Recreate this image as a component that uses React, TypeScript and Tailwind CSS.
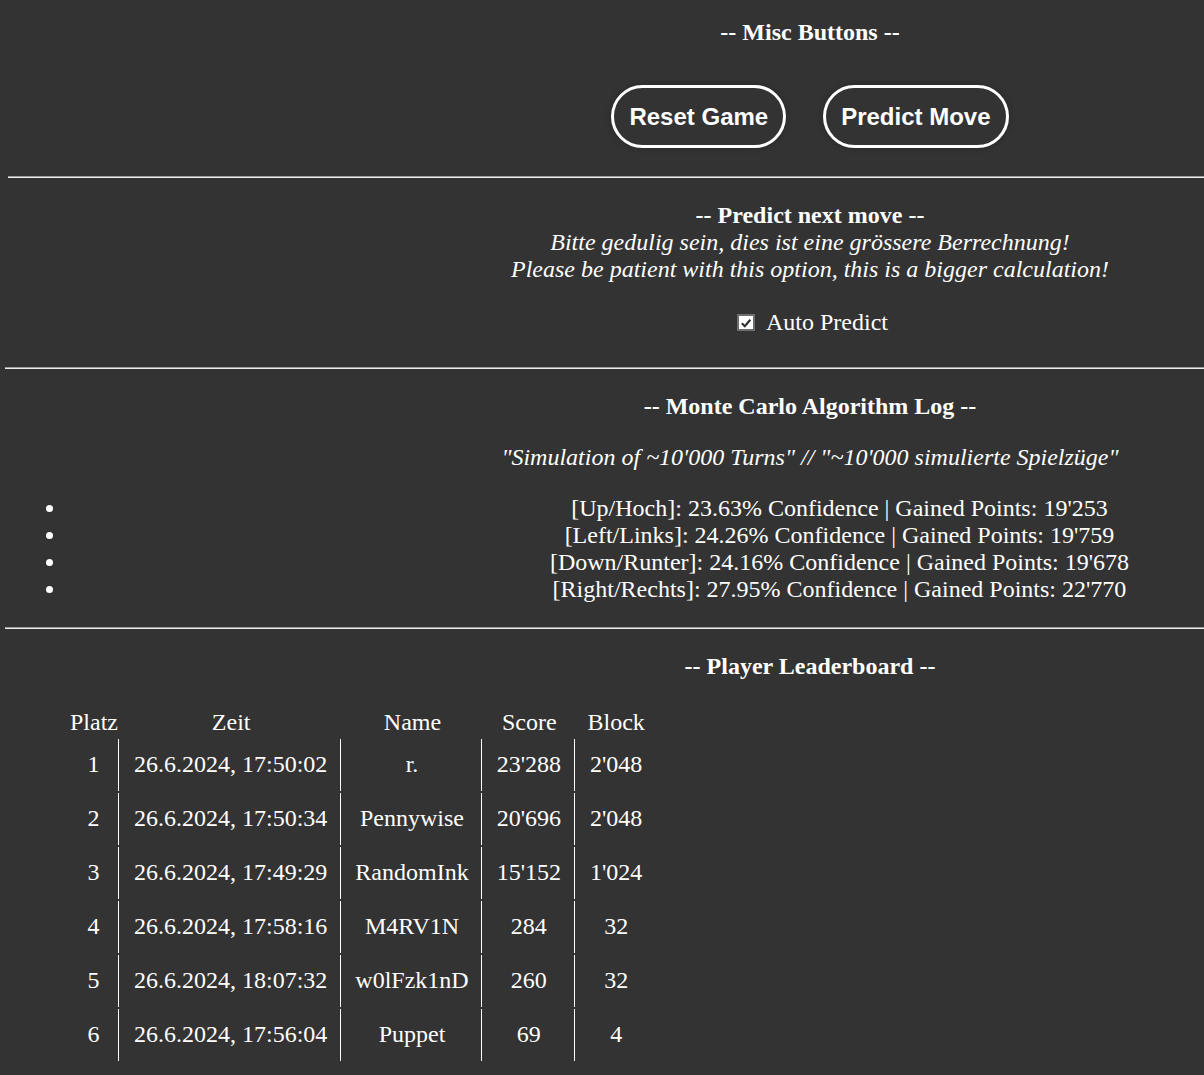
import { Fragment } from "react";

const MOVES = [
  { dir: "[Up/Hoch]", conf: "23.63%", pts: "19'253" },
  { dir: "[Left/Links]", conf: "24.26%", pts: "19'759" },
  { dir: "[Down/Runter]", conf: "24.16%", pts: "19'678" },
  { dir: "[Right/Rechts]", conf: "27.95%", pts: "22'770" },
];

const PLAYERS = [
  { rank: 1, time: "26.6.2024, 17:50:02", name: "r.", score: "23'288", block: "2'048" },
  { rank: 2, time: "26.6.2024, 17:50:34", name: "Pennywise", score: "20'696", block: "2'048" },
  { rank: 3, time: "26.6.2024, 17:49:29", name: "RandomInk", score: "15'152", block: "1'024" },
  { rank: 4, time: "26.6.2024, 17:58:16", name: "M4RV1N", score: "284", block: "32" },
  { rank: 5, time: "26.6.2024, 18:07:32", name: "w0lFzk1nD", score: "260", block: "32" },
  { rank: 6, time: "26.6.2024, 17:56:04", name: "Puppet", score: "69", block: "4" },
];

function Rule({ className = "" }: { className?: string }) {
  return <div className={`h-[2px] border-t border-b border-t-[#9c9c9c] border-b-[#ececec] ${className}`} />;
}

function Heading({ children, className = "" }: { children: React.ReactNode; className?: string }) {
  return <div className={`text-center font-bold ${className}`}>{children}</div>;
}

function PillButton({ label }: { label: string }) {
  return (
    <button className="rounded-full border-[3px] border-white bg-transparent px-[15px] py-[15px] font-['Liberation_Sans',Arial,sans-serif] text-[24px] font-bold leading-[27px] text-white shadow-[0_0_6px_rgba(0,0,0,0.25)]">
      {label}
    </button>
  );
}

export default function App() {
  const th = "px-[1px] py-[1px] text-center font-normal";
  const td = "border-r border-white pt-3 pb-[13px] text-center";

  return (
    <div className="min-h-screen w-full overflow-hidden bg-[#333333]">
      <div className="w-[1620px] pt-[19px] pb-6 font-['Liberation_Serif','Times_New_Roman',serif] text-[24px] leading-[27px] text-white">
        <Heading>-- Misc Buttons --</Heading>
        <div className="mt-[39px] flex justify-center gap-[37px]">
          <PillButton label="Reset Game" />
          <PillButton label="Predict Move" />
        </div>

        <Rule className="ml-[8px] mt-[28px]" />

        <Heading className="mt-[24px]">-- Predict next move --</Heading>
        <div className="text-center italic">
          <div>Bitte gedulig sein, dies ist eine grössere Berrechnung!</div>
          <div>Please be patient with this option, this is a bigger calculation!</div>
        </div>
        <div className="mt-[26px] flex items-center justify-center pl-[5px]">
          <span className="mr-[11px] flex h-[17px] w-[18px] items-center justify-center border-2 border-[#6e6e6e] bg-white">
            <svg viewBox="0 0 12 12" className="h-[12px] w-[12px]">
              <path d="M1.8 6.3 L4.8 9.2 L10.3 2.8" fill="none" stroke="#333333" strokeWidth="2.2" />
            </svg>
          </span>
          <span>Auto Predict</span>
        </div>

        <Rule className="ml-[5px] mt-[31px]" />

        <Heading className="mt-[24px]">-- Monte Carlo Algorithm Log --</Heading>
        <div className="mt-[24px] text-center italic">
          "Simulation of ~10'000 Turns" // "~10'000 simulierte Spielzüge"
        </div>
        <ul className="mt-[24px] list-disc pl-[67px] pr-[8px]">
          {MOVES.map((m) => (
            <li key={m.dir} className="text-center">
              {m.dir}: {m.conf} Confidence | Gained Points: {m.pts}
            </li>
          ))}
        </ul>

        <Rule className="ml-[5px] mt-[24px]" />

        <Heading className="mt-[24px]">-- Player Leaderboard --</Heading>
        <table className="ml-[67px] mt-[26px] border-separate border-spacing-[2px]">
          <thead>
            <tr>
              <th className={th}>Platz</th>
              <th className={th}>Zeit</th>
              <th className={th}>Name</th>
              <th className={th}>Score</th>
              <th className={th}>Block</th>
            </tr>
          </thead>
          <tbody>
            {PLAYERS.map((p) => (
              <Fragment key={p.rank}>
                <tr>
                  <td className={`${td} px-3`}>{p.rank}</td>
                  <td className={`${td} px-[13px]`}>{p.time}</td>
                  <td className={`${td} px-3`}>{p.name}</td>
                  <td className={`${td} px-[13px]`}>{p.score}</td>
                  <td className="px-[13px] pt-3 pb-[13px] text-center">{p.block}</td>
                </tr>
              </Fragment>
            ))}
          </tbody>
        </table>
      </div>
    </div>
  );
}
